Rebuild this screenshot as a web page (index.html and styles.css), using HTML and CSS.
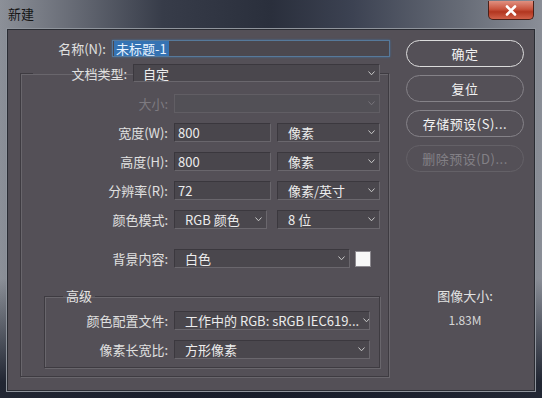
FILE: index.html
```html
<!DOCTYPE html>
<html lang="zh-CN">
<head>
    <meta charset="UTF-8">
    <title>新建</title>
    <link rel="stylesheet" href="styles.css">
</head>
<body>
<div class="window">
    <div class="titlebar">
        <span class="title">新建</span>
        <span class="close">
            <svg width="14" height="11" viewBox="0 0 14 11"><path d="M3 1.5 L11 9.5 M11 1.5 L3 9.5" stroke="#fff" stroke-width="2.6" stroke-linecap="round"/></svg>
        </span>
    </div>
    <div class="content">
        <div class="form">
            <div class="row name-row">
                <span class="lbl name-lbl">名称(N):</span>
                <div class="field name-field"><span class="selected">未标题-1</span></div>
            </div>

            <fieldset class="group">
                <legend class="group-legend">
                    <span class="lbl doc-lbl">文档类型:</span>
                    <div class="select doc-select"><span>自定</span><svg class="chev" width="7" height="5" viewBox="0 0 7 5"><path d="M0.5 0.5 L3.5 3.8 L6.5 0.5" fill="none" stroke="#c8c8c8"/></svg></div>
                </legend>

                <div class="row first-row">
                    <span class="lbl outer-lbl disabled">大小:</span>
                    <div class="select grow off"><span></span><svg class="chev" width="7" height="5" viewBox="0 0 7 5"><path d="M0.5 0.5 L3.5 3.8 L6.5 0.5" fill="none" stroke="#77747a"/></svg></div>
                </div>
                <div class="row">
                    <span class="lbl outer-lbl">宽度(W):</span>
                    <div class="field num">800</div>
                    <div class="select unit"><span>像素</span><svg class="chev" width="7" height="5" viewBox="0 0 7 5"><path d="M0.5 0.5 L3.5 3.8 L6.5 0.5" fill="none" stroke="#c8c8c8"/></svg></div>
                </div>
                <div class="row">
                    <span class="lbl outer-lbl">高度(H):</span>
                    <div class="field num">800</div>
                    <div class="select unit"><span>像素</span><svg class="chev" width="7" height="5" viewBox="0 0 7 5"><path d="M0.5 0.5 L3.5 3.8 L6.5 0.5" fill="none" stroke="#c8c8c8"/></svg></div>
                </div>
                <div class="row">
                    <span class="lbl outer-lbl">分辨率(R):</span>
                    <div class="field num">72</div>
                    <div class="select unit"><span>像素/英寸</span><svg class="chev" width="7" height="5" viewBox="0 0 7 5"><path d="M0.5 0.5 L3.5 3.8 L6.5 0.5" fill="none" stroke="#c8c8c8"/></svg></div>
                </div>
                <div class="row">
                    <span class="lbl outer-lbl">颜色模式:</span>
                    <div class="select mode"><span>RGB 颜色</span><svg class="chev" width="7" height="5" viewBox="0 0 7 5"><path d="M0.5 0.5 L3.5 3.8 L6.5 0.5" fill="none" stroke="#c8c8c8"/></svg></div>
                    <div class="select unit bits"><span>8 位</span><svg class="chev" width="7" height="5" viewBox="0 0 7 5"><path d="M0.5 0.5 L3.5 3.8 L6.5 0.5" fill="none" stroke="#c8c8c8"/></svg></div>
                </div>
                <div class="row bg-row">
                    <span class="lbl outer-lbl">背景内容:</span>
                    <div class="select bg-select"><span>白色</span><svg class="chev" width="7" height="5" viewBox="0 0 7 5"><path d="M0.5 0.5 L3.5 3.8 L6.5 0.5" fill="none" stroke="#c8c8c8"/></svg></div>
                    <span class="swatch"></span>
                </div>

                <fieldset class="adv">
                    <legend class="adv-legend">高级</legend>
                    <div class="row first-adv">
                        <span class="lbl inner-lbl">颜色配置文件:</span>
                        <div class="select wide"><span>工作中的 RGB: sRGB IEC619...</span><svg class="chev" width="7" height="5" viewBox="0 0 7 5"><path d="M0.5 0.5 L3.5 3.8 L6.5 0.5" fill="none" stroke="#c8c8c8"/></svg></div>
                    </div>
                    <div class="row">
                        <span class="lbl inner-lbl">像素长宽比:</span>
                        <div class="select wide"><span>方形像素</span><svg class="chev" width="7" height="5" viewBox="0 0 7 5"><path d="M0.5 0.5 L3.5 3.8 L6.5 0.5" fill="none" stroke="#c8c8c8"/></svg></div>
                    </div>
                </fieldset>
            </fieldset>
        </div>

        <div class="side">
            <div class="btn primary">确定</div>
            <div class="btn">复位</div>
            <div class="btn">存储预设(S)...</div>
            <div class="btn off">删除预设(D)...</div>
            <div class="info">
                <div>图像大小:</div>
                <div class="size">1.83M</div>
            </div>
        </div>
    </div>
</div>
</body>
</html>
```

FILE: styles.css
```css
* {
    box-sizing: border-box;
}
body {
    margin: 0;
    font-family: "Noto Sans CJK SC", "Noto Sans", sans-serif;
    font-size: 13px;
}
.window {
    width: 542px;
    height: 398px;
    display: flex;
    flex-direction: column;
    background:
        linear-gradient(180deg, rgba(20, 25, 38, 0) 0%, rgba(20, 25, 38, 0) 70%, rgba(22, 27, 40, 0.9) 96%),
        linear-gradient(90deg, #8c9098 0%, #6b6f79 12%, #373c49 30%, #2a2f3c 50%, #3c4252 65%, #666b76 85%, #8a8e97 100%);
}
.titlebar {
    height: 29px;
    display: flex;
    justify-content: space-between;
    align-items: flex-start;
}
.title {
    padding: 6px 0 0 8px;
    line-height: 16px;
    color: #151515;
}
.close {
    margin: 1px 8px 0 0;
    width: 46px;
    height: 19px;
    display: flex;
    align-items: center;
    justify-content: center;
    border: 1px solid #4a2018;
    border-top: 0;
    border-radius: 0 0 5px 5px;
    background: linear-gradient(180deg, #e09080 0%, #c9543e 45%, #b23620 60%, #d06048 100%);
}
.content {
    margin: 0 7px;
    height: 362px;
    display: flex;
    padding-top: 10px;
    background: #545057;
    border: 1px solid #2a2c33;
    box-shadow: 0 0 0 1px #8f949c;
    color: #e6e6e6;
}

/* form column */
.form {
    width: 382px;
}
.row {
    display: flex;
    align-items: center;
    gap: 6px;
    height: 19px;
    margin-top: 10px;
}
.lbl {
    flex: none;
    text-align: right;
    white-space: nowrap;
    color: #e0e0e0;
}
.disabled {
    color: #7d7a80;
}
.name-row {
    margin-top: 0;
    height: 17px;
}
.name-lbl {
    width: 98px;
}
.field {
    height: 100%;
    display: flex;
    align-items: center;
    padding: 0 3px;
    background: #49464c;
    border: 1px solid #3a373d;
    border-bottom-color: #69666c;
    border-right-color: #69666c;
    color: #ececec;
}
.name-field {
    width: 278px;
    padding: 0 1px;
    border: 1px solid #56799b;
    box-shadow: 0 0 2px #3f6f9c;
    background: #4b484f;
}
.selected {
    background: #3573b3;
    color: #e9f3ff;
    line-height: 15px;
    padding: 0 2px;
}
.select {
    height: 100%;
    display: flex;
    align-items: center;
    justify-content: space-between;
    padding: 0 4px 0 10px;
    background: #4a474d;
    border: 1px solid #3b383e;
    border-bottom-color: #6a676d;
    border-right-color: #6a676d;
    color: #ececec;
    white-space: nowrap;
    overflow: hidden;
}
.chev {
    flex: none;
    margin-left: 4px;
}
.select.off {
    background: #525056;
    border-color: #615e64;
}

/* group */
.group {
    margin: 7px 0 0 12px;
    width: 369px;
    padding: 0 8px 0 12px;
    border: 1px solid #3e3b41;
    box-shadow: inset 1px 1px 0 #69666c, 1px 1px 0 #69666c;
}
.group-legend {
    padding: 0;
    display: flex;
    align-items: center;
    gap: 6px;
    height: 18px;
}
.doc-lbl {
    width: 94px;
}
.doc-select {
    width: 247px;
    padding-left: 9px;
}
.first-row {
    margin-top: 12px;
}
.outer-lbl {
    width: 135px;
}
.grow {
    width: 206px;
}
.num {
    width: 97px;
}
.unit {
    width: 103px;
}
.mode {
    width: 93px;
}
.bits {
    margin-left: 4px;
}
.bg-row {
    margin-top: 20px;
}
.bg-select {
    width: 176px;
}
.swatch {
    width: 16px;
    height: 16px;
    margin-left: -1px;
    background: #f8f8f8;
    border: 1px solid #8d8a90;
}

/* advanced */
.adv {
    margin: 20px 0 8px 11px;
    width: 336px;
    padding: 0 9px 8px 18px;
    border: 1px solid #3e3b41;
    box-shadow: inset 1px 1px 0 #69666c, 1px 1px 0 #69666c;
}
.adv-legend {
    padding: 0 3px;
    line-height: 16px;
    color: #e4e4e4;
}
.first-adv {
    margin-top: 7px;
}
.inner-lbl {
    width: 105px;
}
.wide {
    width: 196px;
}

/* buttons */
.side {
    margin-left: 16px;
    width: 118px;
    display: flex;
    flex-direction: column;
    gap: 8px;
}
.btn {
    height: 27px;
    display: flex;
    align-items: center;
    justify-content: center;
    border: 1px solid #858288;
    border-radius: 14px;
    color: #f2f2f2;
    letter-spacing: 0.5px;
}
.btn.primary {
    border-color: #dcdcdc;
}
.btn.off {
    border-color: #646167;
    color: #838086;
}
.info {
    margin-top: 108px;
    display: flex;
    flex-direction: column;
    align-items: center;
    gap: 8px;
    line-height: 16px;
    color: #e2e2e2;
}
.size {
    font-size: 12px;
    color: #d6d6d6;
}
```
